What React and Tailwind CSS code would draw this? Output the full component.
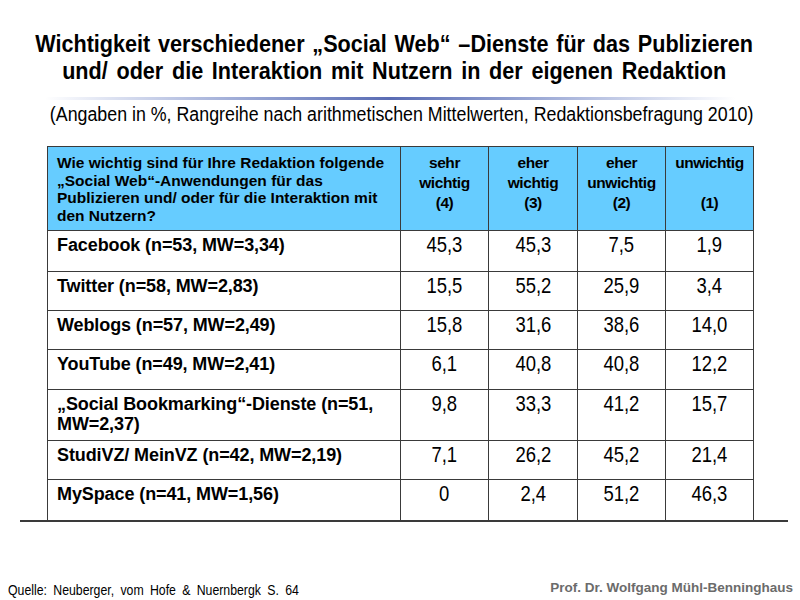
const rows = [
  { label: 'Facebook (n=53, MW=3,34)', values: ['45,3', '45,3', '7,5', '1,9'], h: 'h-[41px]' },
  { label: 'Twitter (n=58, MW=2,83)', values: ['15,5', '55,2', '25,9', '3,4'], h: 'h-[39px]' },
  { label: 'Weblogs (n=57, MW=2,49)', values: ['15,8', '31,6', '38,6', '14,0'], h: 'h-[39px]' },
  { label: 'YouTube (n=49, MW=2,41)', values: ['6,1', '40,8', '40,8', '12,2'], h: 'h-[40px]' },
  { label: '„Social Bookmarking“-Dienste (n=51, MW=2,37)', values: ['9,8', '33,3', '41,2', '15,7'], h: 'h-[51px]' },
  { label: 'StudiVZ/ MeinVZ (n=42, MW=2,19)', values: ['7,1', '26,2', '45,2', '21,4'], h: 'h-[39px]' },
  { label: 'MySpace (n=41, MW=1,56)', values: ['0', '2,4', '51,2', '46,3'], h: 'h-[41px]' },
]

const colHeads = [
  ['sehr', 'wichtig', '(4)'],
  ['eher', 'wichtig', '(3)'],
  ['eher', 'unwichtig', '(2)'],
  ['unwichtig', '\u00a0', '(1)'],
]

export default function App() {
  return (
    <div className="w-[800px] h-[600px] bg-white text-black flex flex-col overflow-hidden font-['Liberation_Sans',Arial,sans-serif]">
      {/* Title (condensed look of the slide) */}
      <h1 className="mt-[30px] -mx-[20px] pr-[13px] text-center text-[24px] leading-[27px] font-bold whitespace-nowrap scale-x-[0.9]">
        <span className="[word-spacing:2px]">Wichtigkeit verschiedener „Social Web“ –Dienste für das Publizieren</span>
        <br />
        <span className="[word-spacing:3px]">und/ oder die Interaktion mit Nutzern in der eigenen Redaktion</span>
      </h1>

      <div className="mt-[13px] ml-[45px] w-[690px] h-[3px] bg-gradient-to-r from-white via-[#5a6cb4] to-white" />

      <p className="mt-[3px] pl-[56px] text-[20px] leading-[22px] origin-left scale-x-[0.89] whitespace-nowrap">
        (Angaben in %, Rangreihe nach arithmetischen Mittelwerten, Redaktionsbefragung 2010)
      </p>

      {/* Table */}
      <div className="mt-[21px] pl-[47px]">
        <table className="border-collapse table-fixed w-[706px]">
          <colgroup>
            <col className="w-[353px]" />
            <col className="w-[88px]" />
            <col className="w-[89px]" />
            <col className="w-[88px]" />
            <col className="w-[88px]" />
          </colgroup>
          <thead>
            <tr className="h-[84px] bg-[#66ccff]">
              <th className="border-[1.5px] border-[#3a3a3a] align-top text-left font-bold text-[15.5px] leading-[17.7px] pl-[9px] pr-[10px] pt-[7px]">
                Wie wichtig sind für Ihre Redaktion folgende „Social Web“-Anwendungen für das Publizieren und/ oder für die Interaktion mit den Nutzern?
              </th>
              {colHeads.map((lines, i) => (
                <th
                  key={i}
                  className="border-[1.5px] border-[#3a3a3a] align-top text-center font-bold text-[15.5px] leading-[20px] pt-[6px] tracking-[-0.4px]"
                >
                  {lines.map((l, j) => (
                    <div key={j}>{l}</div>
                  ))}
                </th>
              ))}
            </tr>
          </thead>
          <tbody>
            {rows.map((r) => (
              <tr key={r.label} className={r.h}>
                <td className="border-[1.5px] border-[#3a3a3a] align-top font-bold text-[18px] leading-[20px] pl-[9px] pr-2 pt-[4px] tracking-[-0.1px]">
                  {r.label}
                </td>
                {r.values.map((v, i) => (
                  <td
                    key={i}
                    className="border-[1.5px] border-[#3a3a3a] align-top text-center text-[22px] leading-[24px] pt-[2px]"
                  >
                    <span className="inline-block scale-x-[0.84]">{v}</span>
                  </td>
                ))}
              </tr>
            ))}
          </tbody>
        </table>
      </div>
      <div className="-mt-[1px] ml-[20px] w-[768px] h-[1.5px] bg-[#3a3a3a]" />

      {/* Footer */}
      <div className="mt-auto mb-[1px] flex items-end justify-between pl-[8px] pr-[7px]">
        <span className="text-[15px] leading-[18px] [word-spacing:3.5px] origin-left scale-x-[0.82] whitespace-nowrap">
          Quelle: Neuberger, vom Hofe &amp; Nuernbergk S. 64
        </span>
        <span className="text-[13.5px] leading-[18px] font-bold text-[#6b6b6b] mb-[2px] whitespace-nowrap">
          Prof. Dr. Wolfgang Mühl-Benninghaus
        </span>
      </div>
    </div>
  )
}
